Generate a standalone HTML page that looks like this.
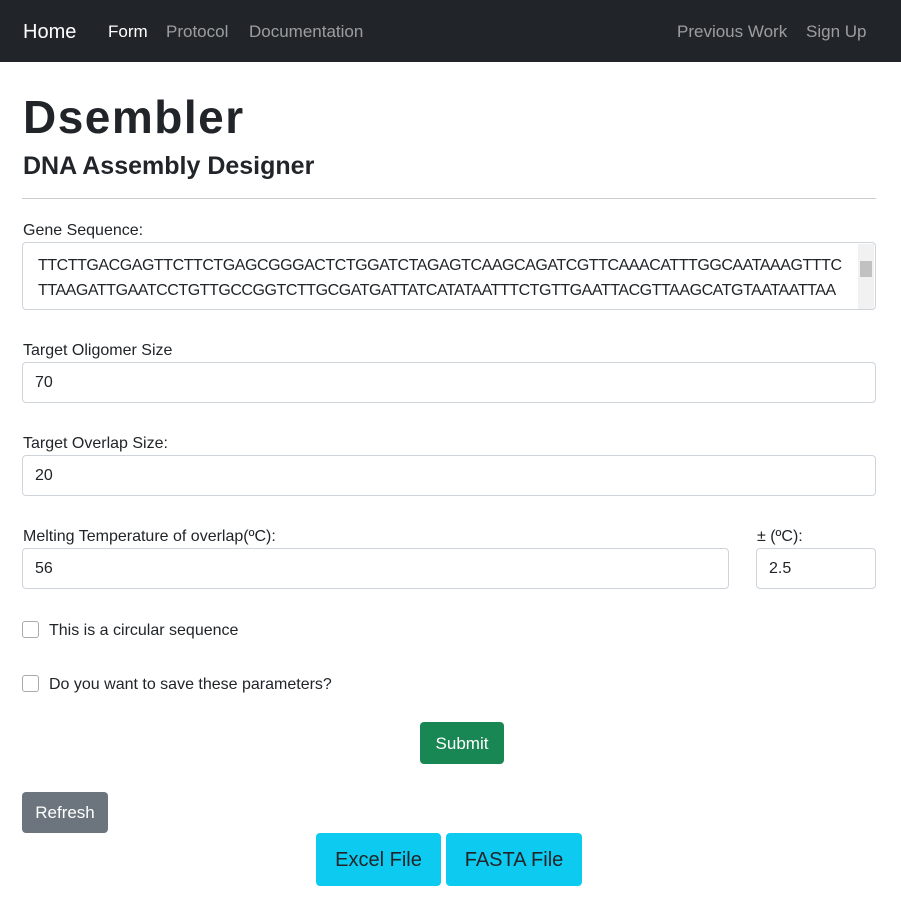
<!DOCTYPE html>
<html><head><style>
*{box-sizing:border-box;margin:0;padding:0}
body{width:901px;height:910px;font-family:"Liberation Sans",sans-serif;color:#212529;background:#fff;font-size:16px;overflow:hidden}
nav{height:62px;background:#212529;position:relative}
nav span{position:absolute;top:22px;font-size:17px;color:rgba(255,255,255,.55)}
nav .b{font-size:20px;top:21px;color:#fff;left:23px}
h1{position:absolute;left:23px;top:90px;font-size:46px;font-weight:bold;letter-spacing:1.5px}
h2{position:absolute;left:23px;top:152px;font-size:25px;font-weight:bold}
hr{position:absolute;left:22px;width:854px;top:198px;border:0;border-top:1px solid #ccc}
label{position:absolute;left:23px;font-size:16px}
.in{position:absolute;border:1px solid #ced4da;border-radius:4px;height:41px;padding:11px 12px;font-size:16px}
.ta{position:absolute;left:22px;top:242px;width:854px;height:68px;border:1px solid #ced4da;border-radius:4px;padding:10px 0 0 15px;font-size:16px;line-height:25px;letter-spacing:-0.45px;white-space:nowrap;overflow:hidden}
.sb{position:absolute;right:1px;top:1px;width:16px;height:65px;background:#f1f1f1}
.cb{position:absolute;left:22px;width:17px;height:17px;border:1px solid #aaa;border-radius:3px}
.btn{position:absolute;border-radius:4px;color:#fff;text-align:center}
</style></head><body>
<nav><span class="b">Home</span><span style="left:108px;color:#fff">Form</span><span style="left:166px">Protocol</span><span style="left:249px">Documentation</span><span style="left:677px">Previous Work</span><span style="left:806px">Sign Up</span></nav>
<h1>Dsembler</h1>
<h2>DNA Assembly Designer</h2>
<hr>
<label style="top:222px">Gene Sequence:</label>
<div class="ta">TTCTTGACGAGTTCTTCTGAGCGGGACTCTGGATCTAGAGTCAAGCAGATCGTTCAAACATTTGGCAATAAAGTTTC<br>TTAAGATTGAATCCTGTTGCCGGTCTTGCGATGATTATCATATAATTTCTGTTGAATTACGTTAAGCATGTAATAATTAA<div class="sb"><div style="position:absolute;top:17px;left:2px;width:12px;height:16px;background:#c1c1c1"></div></div></div>
<label style="top:342px">Target Oligomer Size</label>
<div class="in" style="left:22px;top:362px;width:854px">70</div>
<label style="top:435px">Target Overlap Size:</label>
<div class="in" style="left:22px;top:455px;width:854px">20</div>
<label style="top:528px">Melting Temperature of overlap(ºC):</label>
<label style="top:528px;left:757px">± (ºC):</label>
<div class="in" style="left:22px;top:548px;width:707px">56</div>
<div class="in" style="left:756px;top:548px;width:120px">2.5</div>
<div class="cb" style="top:621px"></div><label style="top:622px;left:49px">This is a circular sequence</label>
<div class="cb" style="top:675px"></div><label style="top:676px;left:49px">Do you want to save these parameters?</label>
<div class="btn" style="left:420px;top:722px;width:84px;height:42px;background:#198754;line-height:43px;font-size:17px">Submit</div>
<div class="btn" style="left:22px;top:792px;width:86px;height:41px;background:#6c757d;line-height:42px;font-size:17px">Refresh</div>
<div class="btn" style="left:316px;top:833px;width:125px;height:53px;background:#0dcaf0;color:#212529;line-height:55px;font-size:20px">Excel File</div>
<div class="btn" style="left:446px;top:833px;width:136px;height:53px;background:#0dcaf0;color:#212529;line-height:55px;font-size:20px">FASTA File</div>
</body></html>
